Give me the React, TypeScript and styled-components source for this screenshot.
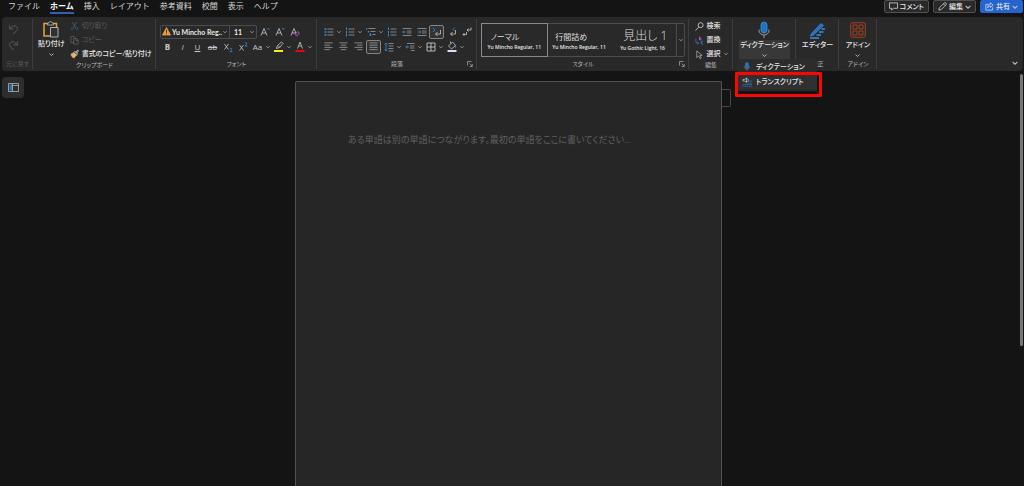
import React from "react";
import styled, { createGlobalStyle, css } from "styled-components";

const color = {
  canvas: "#141414",
  panel: "#292929",
  raised: "#383838",
  line: "#3d3d3d",
  text: "#e8e8e8",
  muted: "#b8b8b8",
  disabled: "#5c5c5c",
  blue: "#2f8fdd",
  share: "#2564cf",
  orange: "#e8a33d",
  rust: "#a8401f",
};

const GlobalStyle = createGlobalStyle`
  * { box-sizing: border-box; }
  body {
    margin: 0;
    background: ${color.canvas};
    color: ${color.text};
    font-family: "Open Sans", "Noto Sans CJK JP", sans-serif;
    font-feature-settings: "palt";
    font-size: 7px;
    overflow: hidden;
  }
  button, select, textarea {
    font: inherit;
    font-feature-settings: inherit;
    color: inherit;
    background: none;
    border: 0;
    margin: 0;
    padding: 0;
  }
  svg { display: block; flex: none; }
`;

const Shell = styled.div`
  display: flex;
  flex-direction: column;
  height: 100vh;
`;

const TopBar = styled.header`
  display: flex;
  align-items: flex-start;
  justify-content: space-between;
  height: 17px;
  padding: 0 1px 0 8px;
`;

const Tabs = styled.nav`
  display: flex;
  gap: 10px;
  font-feature-settings: normal;
`;

const Tab = styled.a<{ $active?: boolean }>`
  color: ${(p) => (p.$active ? "#ffffff" : "#d6d6d6")};
  font-size: 8px;
  font-weight: ${(p) => (p.$active ? 700 : 400)};
  line-height: 12px;
  height: 14px;
  text-decoration: none;
  white-space: nowrap;
  border-bottom: 2px solid ${(p) => (p.$active ? "#2f5fb4" : "transparent")};
`;

const Actions = styled.div`
  display: flex;
  gap: 4px;
`;

const ActionButton = styled.button<{ $primary?: boolean }>`
  display: flex;
  align-items: center;
  gap: 2px;
  height: 13px;
  padding: 0 4px;
  border: 1px solid ${(p) => (p.$primary ? color.share : "#505050")};
  border-radius: 2px;
  background: ${(p) => (p.$primary ? color.share : color.panel)};
  font-weight: 500;
  line-height: 10px;
  white-space: nowrap;
`;

const Ribbon = styled.section`
  position: relative;
  z-index: 1;
  display: flex;
  height: 54px;
  margin: 0 1px 0 2px;
  background: ${color.panel};
  border-radius: 4px;
`;

const Group = styled.div<{ $width: number }>`
  position: relative;
  display: flex;
  flex-direction: column;
  flex: 0 0 ${(p) => p.$width}px;
  min-width: 0;
  padding: 2px 4px 3px;

  &::after {
    content: "";
    position: absolute;
    top: 2px;
    right: 0;
    bottom: 2px;
    width: 1px;
    background: ${color.line};
  }
`;

const GroupBody = styled.div<{ $top?: number; $gap?: number; $justify?: string }>`
  display: flex;
  flex: 1;
  align-items: flex-start;
  justify-content: ${(p) => p.$justify ?? "flex-start"};
  gap: ${(p) => p.$gap ?? 0}px;
  padding-top: ${(p) => p.$top ?? 0}px;
`;

const GroupFooter = styled.div<{ $dim?: boolean }>`
  display: grid;
  grid-template-columns: 1fr auto 1fr;
  align-items: center;
  height: 8px;
  color: ${(p) => (p.$dim ? color.disabled : color.muted)};
  font-size: 6px;
  line-height: 8px;
  white-space: nowrap;
`;

const GroupLabel = styled.span`
  grid-column: 2;
`;

const Launcher = styled.button`
  grid-column: 3;
  justify-self: end;
`;

const Rows = styled.div<{ $gap?: number }>`
  display: flex;
  flex-direction: column;
  gap: ${(p) => p.$gap ?? 0}px;
`;

const ToolRow = styled.div`
  display: flex;
  align-items: center;
  height: 15px;
`;

const Tool = styled.button<{ $on?: boolean }>`
  display: flex;
  flex: none;
  align-items: center;
  justify-content: center;
  width: 15px;
  height: 14px;
  color: #c8c8c8;
  font-size: 8px;
  line-height: 10px;
  border: 1px solid transparent;
  border-radius: 2px;
  ${(p) =>
    p.$on &&
    css`
      border-color: #858585;
      background: #333333;
    `}
`;

const MenuArrow = styled.button`
  display: flex;
  flex: none;
  justify-content: center;
  width: 6px;
`;

const FontBoxes = styled.div`
  display: flex;
  height: 14px;
  border: 1px solid #4c4c4c;
  border-radius: 2px;
`;

const SelectBox = styled.label<{ $width: number }>`
  display: flex;
  align-items: center;
  gap: 1px;
  width: ${(p) => p.$width}px;
  padding: 0 2px 0 1px;

  & + & {
    border-left: 1px solid #4c4c4c;
    padding-left: 4px;
  }
`;

const Select = styled.select`
  appearance: none;
  flex: 1;
  min-width: 0;
  font-family: Lato, "Noto Sans CJK JP", sans-serif;
  font-weight: 700;
  line-height: 10px;
  outline: 0;
`;

const CommandButton = styled.button<{ $strong?: boolean }>`
  display: flex;
  align-items: center;
  gap: 3px;
  height: 14px;
  font-weight: ${(p) => (p.$strong ? 500 : 400)};
  line-height: 10px;
  white-space: nowrap;

  &:disabled {
    color: ${color.disabled};
  }
`;

const BigButton = styled.button`
  display: flex;
  flex-direction: column;
  align-items: center;
  white-space: nowrap;
`;

const BigCaption = styled.span<{ $open?: boolean }>`
  display: flex;
  flex-direction: column;
  align-items: center;
  gap: 3px;
  height: 19px;
  padding: 0 1px;
  font-weight: 500;
  line-height: 10px;
  background: ${(p) => (p.$open ? color.raised : "transparent")};
`;

const BigIcon = styled.span`
  display: flex;
  align-items: center;
  height: 20px;
`;

const Gallery = styled.div`
  display: flex;
  flex: 1;
  height: 34px;
  border: 1px solid #4c4c4c;
  border-radius: 2px;
`;

const StyleCard = styled.button<{ $selected?: boolean }>`
  flex: 1;
  display: flex;
  justify-content: center;
  align-items: center;
  outline: ${(p) => (p.$selected ? "1px solid #8a8a8a" : "none")};
  text-align: left;
`;

const StyleSample = styled.span`
  display: flex;
  flex-direction: column;
`;

const StyleName = styled.span<{ $large?: boolean }>`
  padding-left: 3px;
  font-size: ${(p) => (p.$large ? 12 : 8)}px;
  font-weight: ${(p) => (p.$large ? 300 : 400)};
  line-height: ${(p) => (p.$large ? 16 : 13)}px;
  color: #dedede;
`;

const StyleFont = styled.span`
  font-size: 5px;
  font-weight: 600;
  line-height: 8px;
  white-space: nowrap;
`;

const GalleryMore = styled.button`
  display: flex;
  align-items: center;
  justify-content: center;
  width: 8px;
  border-left: 1px solid #4c4c4c;
`;

const DictateMenu = styled.div`
  position: absolute;
  z-index: 3;
  top: 42px;
  left: 4px;
  width: 80px;
  padding-bottom: 2px;
  background: #2c2c2c;
`;

const MenuItem = styled.button<{ $hover?: boolean }>`
  display: flex;
  align-items: center;
  gap: 4px;
  width: 100%;
  height: 15px;
  padding-left: 5px;
  font-weight: 500;
  line-height: 10px;
  white-space: nowrap;
  background: ${(p) => (p.$hover ? "#303030" : "transparent")};
`;

const Callout = styled.div`
  position: absolute;
  top: 13px;
  left: -2px;
  right: -5px;
  height: 25px;
  border: 3px solid #fb0505;
  border-radius: 1px;
  pointer-events: none;
`;

const CollapseButton = styled.button`
  align-self: flex-end;
  margin: 0 5px 5px auto;
`;

const Workspace = styled.main`
  display: grid;
  grid-template-columns: 1fr auto 1fr 7px;
  flex: 1;
  min-height: 0;
`;

const PaneButton = styled.button`
  display: flex;
  align-items: center;
  justify-content: center;
  width: 22px;
  height: 21px;
  margin: 6px 0 0 2px;
  border-radius: 4px;
  background: #2e2e2e;
`;

const Page = styled.div`
  width: 427px;
  max-width: 100%;
  margin-top: 10px;
  padding: 52px 52px 0;
  background: #262626;
  border: 1px solid #515151;
  border-bottom: 0;
  border-radius: 2px 2px 0 0;
`;

const Editor = styled.textarea`
  display: block;
  width: 100%;
  height: 100%;
  resize: none;
  outline: 0;
  overflow: hidden;
  font-family: "Liberation Serif", "Noto Sans CJK JP", serif;
  font-size: 9px;
  line-height: 13px;
  white-space: nowrap;

  &::placeholder {
    color: #606060;
    opacity: 1;
  }
`;

const MarginMarker = styled.div`
  width: 9px;
  height: 18px;
  margin-top: 18px;
  border: 1px solid #484848;
  border-left: 0;
  border-radius: 0 2px 2px 0;
`;

const ScrollTrack = styled.div`
  display: flex;
  justify-content: flex-end;
  padding: 3px 1px 0 0;
`;

const ScrollThumb = styled.div`
  width: 3px;
  height: 66%;
  border-radius: 2px;
  background: #777777;
`;

type IconProps = { w?: number; h?: number; box?: string; children: React.ReactNode };

const Icon = ({ w = 10, h = 10, box = "0 0 20 20", children }: IconProps) => (
  <svg width={w} height={h} viewBox={box} fill="none" stroke="currentColor" strokeWidth="1.6" aria-hidden="true">
    {children}
  </svg>
);

const Chevron = ({ w = 4 }: { w?: number }) => (
  <Icon w={w} h={w} box="0 0 10 10"><path d="M1 3l4 4 4-4" stroke="#bdbdbd" strokeWidth="1.8" /></Icon>
);

const Arrow = ({ label }: { label: string }) => (
  <MenuArrow aria-label={label}><Chevron /></MenuArrow>
);

const LauncherIcon = () => (
  <Icon w={6} h={6} box="0 0 12 12"><path d="M1 9V1h8M5 5l5 5M10.500 6v5h-5" stroke="#a0a0a0" /></Icon>
);

const MicIcon = ({ w = 12, h = 18 }: { w?: number; h?: number }) => (
  <Icon w={w} h={h} box="0 0 24 36">
    <rect x="6" y="2" width="12" height="22" rx="6" fill="#1f72c4" stroke="#3a96e8" strokeWidth="1.500" />
    <path d="M2 17v2a10 9 0 0 0 20 0v-2M12 28v6" stroke="#9a9a9a" strokeWidth="2" />
  </Icon>
);

const UndoIcon = ({ flip }: { flip?: boolean }) => (
  <Icon w={11} h={11}>
    <g transform={flip ? "matrix(-1 0 0 1 20 0)" : undefined} stroke="#616161">
      <path d="M3 2v7h7M3.500 8.500L8 4.500c3-2.500 7-1 8.500 1.500 1.400 3 .5 5-1.500 7l-6 5.500" />
    </g>
  </Icon>
);

const ClipboardIcon = () => (
  <Icon w={16} h={17} box="0 0 32 34">
    <path d="M9 5H2v25h13M21 5h6v7" stroke={color.orange} strokeWidth="3" />
    <path d="M9 8V4h3c0-4 6-4 6 0h3v4z" stroke="#b0b0b0" strokeWidth="1.800" />
    <path d="M15 13h15v19H15z" fill="#303030" stroke="#b0b0b0" strokeWidth="2" />
  </Icon>
);

const ScissorsIcon = () => (
  <Icon w={9}>
    <path d="M5 1l8 13M15 1L7 14" stroke="#666666" />
    <circle cx="5" cy="16" r="2.500" stroke="#275c88" /><circle cx="15" cy="16" r="2.500" stroke="#275c88" />
  </Icon>
);

const CopyIcon = () => (
  <Icon w={9}><path d="M8 16H2V2h7l2 2M8 6h6l4 4v9H8zM13 6v5h5" stroke="#666666" /></Icon>
);

const BrushIcon = () => (
  <Icon w={9}>
    <path d="M2 10l7-3 5 6-5 6c-4-1-6-4-7-9z" fill="#e9b76a" stroke={color.orange} />
    <path d="M8 7l3-3 6 6-3 3zM13 6l4-5 2 2-4 5" stroke="#d5d5d5" fill="#6b6b6b" />
  </Icon>
);

const WarningIcon = () => (
  <Icon w={9} h={9}>
    <path d="M10 1l9 17H1z" fill="#e8a040" stroke="#e8a040" />
    <path d="M10 6v7M10 14.500v2" stroke="#4b3210" strokeWidth="2" />
  </Icon>
);

const LetterIcon = ({ children }: { children?: React.ReactNode }) => (
  <Icon><path d="M2 17L8 3l6 14M4 12h8" />{children}</Icon>
);

const HighlightIcon = () => (
  <Icon w={10} h={12} box="0 0 20 24">
    <path d="M5 14l2-5 8-7 3 3-7 8-6 2zM8 9l4 4" />
    <path d="M0 20h18" stroke="#f5ec1b" strokeWidth="4" />
  </Icon>
);

const FontColorIcon = () => (
  <Icon w={10} h={12} box="0 0 20 24">
    <path d="M5 15l5-13 5 13M7 10h6" />
    <path d="M1 20h18" stroke="#f00505" strokeWidth="4" />
  </Icon>
);

const ListIcon = ({ numbered }: { numbered?: boolean }) => (
  <Icon>
    <path d="M7 4h12M7 10h12M7 16h12" stroke="#9c9c9c" />
    <path d={numbered ? "M3 1v5M3 8v5M3 14v5" : "M1 4h4M1 10h4M1 16h4"} stroke={color.blue} strokeWidth={numbered ? 2 : 3} />
  </Icon>
);

const MultiListIcon = () => (
  <Icon>
    <path d="M5 3h14M9 9h10M13 15h6" stroke="#9c9c9c" />
    <path d="M1 2v3M5 8v3M9 13v5" stroke={color.blue} strokeWidth="3" />
  </Icon>
);

const IndentIcon = ({ out }: { out?: boolean }) => (
  <Icon>
    <path d="M1 3h18M10 8h9M10 12h9M1 17h18" stroke="#9c9c9c" />
    <path d={out ? "M8 10H1M4 7l-3 3 3 3" : "M1 10h7M5 7l3 3-3 3"} stroke={color.blue} />
  </Icon>
);

const TurnIcon = ({ kind }: { kind: "ltr" | "rtl" }) => (
  <Icon>
    <path d="M17 6v8H7M11 10l-4 4 4 4" />
    {kind === "ltr" && <path d="M2 2l4 4-4 4" stroke={color.blue} />}
    {kind === "rtl" && <path d="M16 1l-4 4 4 4" stroke={color.blue} />}
  </Icon>
);

const ShowMarksIcon = () => (
  <Icon>
    <path d="M18 1v5h-8M13 3l-3 3 3 3" />
    <path d="M9 10v5H2M5 12l-3 3 3 3" />
  </Icon>
);

const alignPaths = {
  left: "M1 2h18M1 7h12M1 12h18M1 17h12",
  center: "M1 2h18M4 7h12M1 12h18M4 17h12",
  right: "M1 2h18M7 7h12M1 12h18M7 17h12",
  justify: "M1 2h18M1 7h18M1 12h18M1 17h18",
};

const AlignIcon = ({ kind }: { kind: keyof typeof alignPaths }) => (
  <Icon w={9} h={9}><path d={alignPaths[kind]} stroke="#ababab" /></Icon>
);

const SpacingIcon = () => (
  <Icon>
    <path d="M9 3h10M9 8h10M9 13h10M9 18h10" stroke="#9c9c9c" />
    <path d="M4 2v16M1 5l3-3 3 3M1 15l3 3 3-3" stroke={color.blue} />
  </Icon>
);

const ColumnsIcon = () => (
  <Icon>
    <path d="M4 3h15M10 8h9M10 12h9M12 17h7" stroke="#9c9c9c" />
    <path d="M1 10h7M4 7v6" stroke={color.blue} />
  </Icon>
);

const BordersIcon = () => (
  <Icon><path d="M2 2h16v16H2zM10 2v16M2 10h16" stroke="#c4c4c4" strokeWidth="1.800" /></Icon>
);

const FillIcon = () => (
  <Icon w={10} h={12} box="0 0 20 24">
    <path d="M3 10l8-8 6 7-8 7zM7 5V1" />
    <path d="M16 9c2 3 2 5 0 5" stroke={color.blue} strokeWidth="2" />
    <path d="M1 20h18" stroke="#d8def5" strokeWidth="4" />
  </Icon>
);

const SearchIcon = () => (
  <Icon w={9} h={9}><circle cx="12.500" cy="7" r="5.500" /><path d="M8.500 11L1 19" /></Icon>
);

const ReplaceIcon = () => (
  <Icon w={9} h={9}>
    <path d="M10 1v8M10 5c5-2 6 4 0 4" stroke="#c05cc8" strokeWidth="2" />
    <path d="M2 6v6c0 4 3 4 6 4M5 13l3 3-3 3" stroke={color.blue} />
    <path d="M18 12c-6-2-6 7 0 6" stroke={color.blue} strokeWidth="2" />
  </Icon>
);

const PointerIcon = () => (
  <Icon w={9} h={9}><path d="M4 2v15l4-4 3 6 3-1-3-6h5z" stroke="#b4b4b4" /></Icon>
);

const EditorPenIcon = () => (
  <Icon w={17} h={17} box="0 0 34 34">
    <path d="M5 23L24 3l5 4-20 19-6 2z" fill="#2370bd" stroke="#3b8ee0" strokeWidth="1.500" />
    <path d="M25 14h7M20 20h9M15 26h9M2 32h18" stroke="#3b8ee0" strokeWidth="3" />
  </Icon>
);

const AddinIcon = () => (
  <Icon w={16} h={16} box="0 0 32 32">
    <rect x="1.500" y="1.500" width="29" height="29" rx="3" stroke={color.rust} strokeWidth="2" />
    <path d="M6 6h8v8H6zM18 6h8v8h-8zM6 18h8v8H6zM18 18h8v8h-8z" stroke={color.rust} strokeWidth="2" />
  </Icon>
);

const TranscriptIcon = () => (
  <Icon w={10} h={10}>
    <path d="M2 5h3l4-3v9L5 8H2zM11 3c2 2 2 5 0 7" stroke="#c8c8c8" />
    <path d="M13 8h7M11 12h9M1 15h19M1 18.500h19" stroke="#2a6ca6" />
  </Icon>
);

const PaneIcon = () => (
  <Icon w={11} h={9} box="0 0 22 18">
    <path d="M3 3h5v12H3z" fill="#1d78c9" stroke="none" />
    <path d="M1 1h20v16H1zM9 1v16M9 5h12" stroke="#b5b5b5" />
  </Icon>
);

const CommentIcon = () => (
  <Icon w={9} h={9}><path d="M1 2h18v12h-9l-4 4v-4H1z" /></Icon>
);

const PencilIcon = () => (
  <Icon w={9} h={9}><path d="M2 18l1-5L14 2c3-2 6 1 4 4L7 17zM12 4l4 4" /></Icon>
);

const ShareIcon = () => (
  <Icon w={9} h={9}><path d="M8 5H2v13h15v-6M12 2l6 5-6 5V9c-3 0-5 1-6 4 0-5 2-8 6-8z" /></Icon>
);

const tabs = ["ファイル", "ホーム", "挿入", "レイアウト", "参考資料", "校閲", "表示", "ヘルプ"];

const stylesList = [
  { name: "ノーマル", font: "Yu Mincho Regular, 11" },
  { name: "行間詰め", font: "Yu Mincho Regular, 11" },
  { name: "見出し 1", font: "Yu Gothic Light, 16", large: true },
];

type FooterProps = { label: string; launcher?: boolean; dim?: boolean };

const Footer = ({ label, launcher, dim }: FooterProps) => (
  <GroupFooter $dim={dim}>
    <GroupLabel>{label}</GroupLabel>
    {launcher && <Launcher aria-label={`${label}の設定`}><LauncherIcon /></Launcher>}
  </GroupFooter>
);

export default function App() {
  return (
    <Shell>
      <GlobalStyle />
      <TopBar>
        <Tabs>
          {tabs.map((t) => (
            <Tab key={t} href="#" $active={t === "ホーム"}>{t}</Tab>
          ))}
        </Tabs>
        <Actions>
          <ActionButton><CommentIcon />コメント</ActionButton>
          <ActionButton><PencilIcon />編集<Chevron w={6} /></ActionButton>
          <ActionButton $primary><ShareIcon />共有<Chevron w={6} /></ActionButton>
        </Actions>
      </TopBar>

      <Ribbon>
        <Group $width={31}>
          <GroupBody $top={3}>
            <Rows $gap={2}>
              <Tool aria-label="元に戻す"><UndoIcon /></Tool>
              <Tool aria-label="やり直し"><UndoIcon flip /></Tool>
            </Rows>
          </GroupBody>
          <Footer label="元に戻す" dim />
        </Group>

        <Group $width={123}>
          <GroupBody $gap={4}>
            <BigButton>
              <BigIcon><ClipboardIcon /></BigIcon>
              <BigCaption>貼り付け<Chevron w={5} /></BigCaption>
            </BigButton>
            <Rows>
              <CommandButton disabled><ScissorsIcon />切り取り</CommandButton>
              <CommandButton disabled><CopyIcon />コピー</CommandButton>
              <CommandButton $strong><BrushIcon />書式のコピー/貼り付け</CommandButton>
            </Rows>
          </GroupBody>
          <Footer label="クリップボード" />
        </Group>

        <Group $width={161}>
          <GroupBody $top={5}>
            <Rows>
              <ToolRow>
                <FontBoxes>
                  <SelectBox $width={68}>
                    <WarningIcon />
                    <Select aria-label="フォント"><option>Yu Mincho Reg...</option></Select>
                    <Chevron />
                  </SelectBox>
                  <SelectBox $width={27}>
                    <Select aria-label="フォント サイズ"><option>11</option></Select>
                    <Chevron />
                  </SelectBox>
                </FontBoxes>
                <Tool aria-label="拡大"><LetterIcon><path d="M14 5l2.500-3L19 5" stroke={color.blue} /></LetterIcon></Tool>
                <Tool aria-label="縮小"><LetterIcon><path d="M14 2l2.500 3L19 2" stroke={color.blue} /></LetterIcon></Tool>
                <Tool aria-label="書式のクリア"><LetterIcon><path d="M10 15l5-6 4 3-5 6z" fill="#4a2650" stroke="#b65cc4" /></LetterIcon></Tool>
              </ToolRow>
              <ToolRow>
                <Tool><b>B</b></Tool>
                <Tool><i>I</i></Tool>
                <Tool><u>U</u></Tool>
                <Tool><s>ab</s></Tool>
                <Tool aria-label="下付き"><Icon><path d="M3 4l8 11M11 4L3 15" /><path d="M14 13c4-2 5 1 0 6h5" stroke={color.blue} /></Icon></Tool>
                <Tool aria-label="上付き"><Icon><path d="M3 6l8 11M11 6L3 17" /><path d="M14 2c4-2 5 1 0 6h5" stroke={color.blue} /></Icon></Tool>
                <Tool>Aa</Tool><Arrow label="文字種の変換" />
                <Tool aria-label="蛍光ペン"><HighlightIcon /></Tool><Arrow label="蛍光ペンの色" />
                <Tool aria-label="フォントの色"><FontColorIcon /></Tool><Arrow label="その他の色" />
              </ToolRow>
            </Rows>
          </GroupBody>
          <Footer label="フォント" />
        </Group>

        <Group $width={160}>
          <GroupBody $top={5}>
            <Rows>
              <ToolRow>
                <Tool aria-label="箇条書き"><ListIcon /></Tool><Arrow label="箇条書きの種類" />
                <Tool aria-label="段落番号"><ListIcon numbered /></Tool><Arrow label="番号の種類" />
                <Tool aria-label="アウトライン"><MultiListIcon /></Tool><Arrow label="リストの種類" />
                <Tool aria-label="リスト"><ListIcon numbered /></Tool>
                <Tool aria-label="インデントを減らす"><IndentIcon out /></Tool>
                <Tool aria-label="インデントを増やす"><IndentIcon /></Tool>
                <Tool aria-label="左から右" $on><TurnIcon kind="ltr" /></Tool>
                <Tool aria-label="右から左"><TurnIcon kind="rtl" /></Tool>
                <Tool aria-label="編集記号"><ShowMarksIcon /></Tool>
              </ToolRow>
              <ToolRow>
                <Tool aria-label="左揃え"><AlignIcon kind="left" /></Tool>
                <Tool aria-label="中央揃え"><AlignIcon kind="center" /></Tool>
                <Tool aria-label="右揃え"><AlignIcon kind="right" /></Tool>
                <Tool aria-label="両端揃え" $on><AlignIcon kind="justify" /></Tool>
                <Tool aria-label="行間"><SpacingIcon /></Tool><Arrow label="行間の種類" />
                <Tool aria-label="間隔"><ColumnsIcon /></Tool><Arrow label="間隔の種類" />
                <Tool aria-label="罫線"><BordersIcon /></Tool><Arrow label="罫線の種類" />
                <Tool aria-label="塗りつぶし"><FillIcon /></Tool><Arrow label="塗りつぶしの色" />
              </ToolRow>
            </Rows>
          </GroupBody>
          <Footer label="段落" launcher />
        </Group>

        <Group $width={212}>
          <GroupBody $top={4}>
            <Gallery>
              {stylesList.map((s, i) => (
                <StyleCard key={s.name} $selected={i === 0}>
                  <StyleSample>
                    <StyleName $large={s.large}>{s.name}</StyleName>
                    <StyleFont>{s.font}</StyleFont>
                  </StyleSample>
                </StyleCard>
              ))}
              <GalleryMore aria-label="その他のスタイル"><Chevron /></GalleryMore>
            </Gallery>
          </GroupBody>
          <Footer label="スタイル" launcher />
        </Group>

        <Group $width={44}>
          <GroupBody $justify="center">
            <Rows>
              <CommandButton $strong><SearchIcon />検索</CommandButton>
              <CommandButton $strong><ReplaceIcon />置換</CommandButton>
              <CommandButton $strong><PointerIcon />選択<Chevron /></CommandButton>
            </Rows>
          </GroupBody>
          <Footer label="編集" />
        </Group>

        <Group $width={63}>
          <GroupBody $justify="center" $top={1}>
            <BigButton>
              <BigIcon><MicIcon /></BigIcon>
              <BigCaption $open>ディクテーション<Chevron w={5} /></BigCaption>
            </BigButton>
          </GroupBody>
          <DictateMenu role="menu">
            <MenuItem role="menuitem"><MicIcon w={10} h={9} />ディクテーション</MenuItem>
            <MenuItem role="menuitem" $hover><TranscriptIcon />トランスクリプト</MenuItem>
            <Callout />
          </DictateMenu>
        </Group>

        <Group $width={43}>
          <GroupBody $justify="center" $top={1}>
            <BigButton>
              <BigIcon><EditorPenIcon /></BigIcon>
              <BigCaption>エディター</BigCaption>
            </BigButton>
          </GroupBody>
          <Footer label="校正" />
        </Group>

        <Group $width={38}>
          <GroupBody $justify="center" $top={1}>
            <BigButton>
              <BigIcon><AddinIcon /></BigIcon>
              <BigCaption>アドイン<Chevron w={5} /></BigCaption>
            </BigButton>
          </GroupBody>
          <Footer label="アドイン" />
        </Group>

        <CollapseButton aria-label="リボンを折りたたむ"><Chevron w={6} /></CollapseButton>
      </Ribbon>

      <Workspace>
        <PaneButton aria-label="ナビゲーション"><PaneIcon /></PaneButton>
        <Page>
          <Editor
            aria-label="本文"
            placeholder="ある単語は別の単語につながります。最初の単語をここに書いてください..."
          />
        </Page>
        <MarginMarker />
        <ScrollTrack><ScrollThumb /></ScrollTrack>
      </Workspace>
    </Shell>
  );
}
